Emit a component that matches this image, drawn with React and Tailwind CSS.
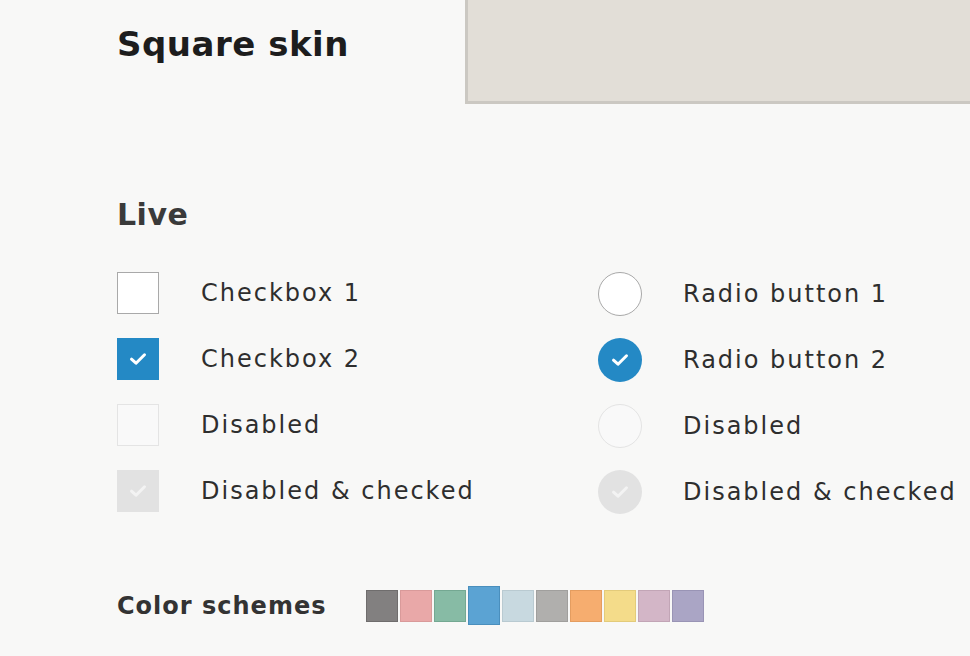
import React from 'react';

const font = { fontFamily: '"DejaVu Sans", "Noto Sans", sans-serif' };

const Check = ({ color = '#fff' }) => (
    <svg width="18" height="14" viewBox="0 0 18 14" fill="none">
        <path d="M2.5 7.2 L7 11.2 L15.5 2.8" stroke={color} strokeWidth="3" strokeLinecap="round" strokeLinejoin="round" />
    </svg>
);

const Box = ({ state }) => {
    if (state === 'checked') return (
        <div className="w-[42px] h-[42px] bg-[#2489c5] flex items-center justify-center"><Check /></div>
    );
    if (state === 'disabledChecked') return (
        <div className="w-[42px] h-[42px] bg-[#e2e2e2] flex items-center justify-center"><Check color="#f3f3f3" /></div>
    );
    if (state === 'disabled') return <div className="w-[42px] h-[42px] border border-[#e4e4e4] bg-[#f9f9f9]" />;
    return <div className="w-[42px] h-[42px] border border-[#a9a9a9] bg-white" />;
};

const Radio = ({ state }) => {
    if (state === 'checked') return (
        <div className="w-[44px] h-[44px] rounded-full bg-[#2489c5] flex items-center justify-center"><Check /></div>
    );
    if (state === 'disabledChecked') return (
        <div className="w-[44px] h-[44px] rounded-full bg-[#e2e2e2] flex items-center justify-center"><Check color="#f3f3f3" /></div>
    );
    if (state === 'disabled') return <div className="w-[44px] h-[44px] rounded-full border border-[#e4e4e4] bg-[#f9f9f9]" />;
    return <div className="w-[44px] h-[44px] rounded-full border border-[#a9a9a9] bg-white" />;
};

const swatches = [
    ['#828080', '#6f6d6d'],
    ['#e9a8a8', '#d99a9a'],
    ['#87bba5', '#74a892'],
    ['#5ba3d3', '#4a8fbd'],
    ['#c8d9e0', '#b9cad1'],
    ['#b0afad', '#a09f9d'],
    ['#f6ad6f', '#e49d60'],
    ['#f4dc8a', '#e3cb7a'],
    ['#d3b6c7', '#c2a5b6'],
    ['#aaa5c5', '#9994b5'],
];

const checks = [['Checkbox 1', 'normal'], ['Checkbox 2', 'checked'], ['Disabled', 'disabled'], ['Disabled & checked', 'disabledChecked']];
const radios = [['Radio button 1', 'normal'], ['Radio button 2', 'checked'], ['Disabled', 'disabled'], ['Disabled & checked', 'disabledChecked']];

export default function App() {
    return (
        <div className="w-[970px] h-[656px] bg-[#f8f8f7] overflow-hidden text-[#2b2b2b]" style={font}>
            {/* header */}
            <div className="flex h-[104px]">
                <div className="w-[465px] pl-[117px] pt-[24px]">
                    <h1 className="text-[34px] leading-[40px] font-bold tracking-[0.5px] text-[#1d1d1d]">Square skin</h1>
                </div>
                <div className="flex-1 bg-[#e2ded7] border-l-[3px] border-b-[3px] border-[#cbc8c2]" />
            </div>

            <div className="pl-[117px]">
                <h2 className="mt-[94px] text-[30px] leading-[34px] font-bold tracking-[0.5px] text-[#3a3a3a]">Live</h2>

                <div className="mt-[40px] flex">
                    <div className="w-[481px] flex flex-col gap-[24px]">
                        {checks.map(([label, state]) => (
                            <div key={label} className="flex items-center h-[42px]">
                                <Box state={state} />
                                <span className="ml-[42px] text-[24px] tracking-[2px] text-[#2e2e2e]">{label}</span>
                            </div>
                        ))}
                    </div>
                    <div className="flex flex-col gap-[22px]">
                        {radios.map(([label, state]) => (
                            <div key={label} className="flex items-center h-[44px]">
                                <Radio state={state} />
                                <span className="ml-[41px] text-[24px] tracking-[2px] text-[#2e2e2e] whitespace-nowrap">{label}</span>
                            </div>
                        ))}
                    </div>
                </div>

                <div className="mt-[72px] flex items-center">
                    <span className="w-[249px] text-[24px] font-bold tracking-[1px] text-[#333]">Color schemes</span>
                    <div className="flex items-center gap-[2px]">
                        {swatches.map(([bg, bd], i) => (
                            <div
                                key={bg}
                                className={i === 3 ? 'w-[32px] h-[39px] border' : 'w-[32px] h-[32px] border'}
                                style={{ background: bg, borderColor: bd }}
                            />
                        ))}
                    </div>
                </div>
            </div>
        </div>
    );
}
